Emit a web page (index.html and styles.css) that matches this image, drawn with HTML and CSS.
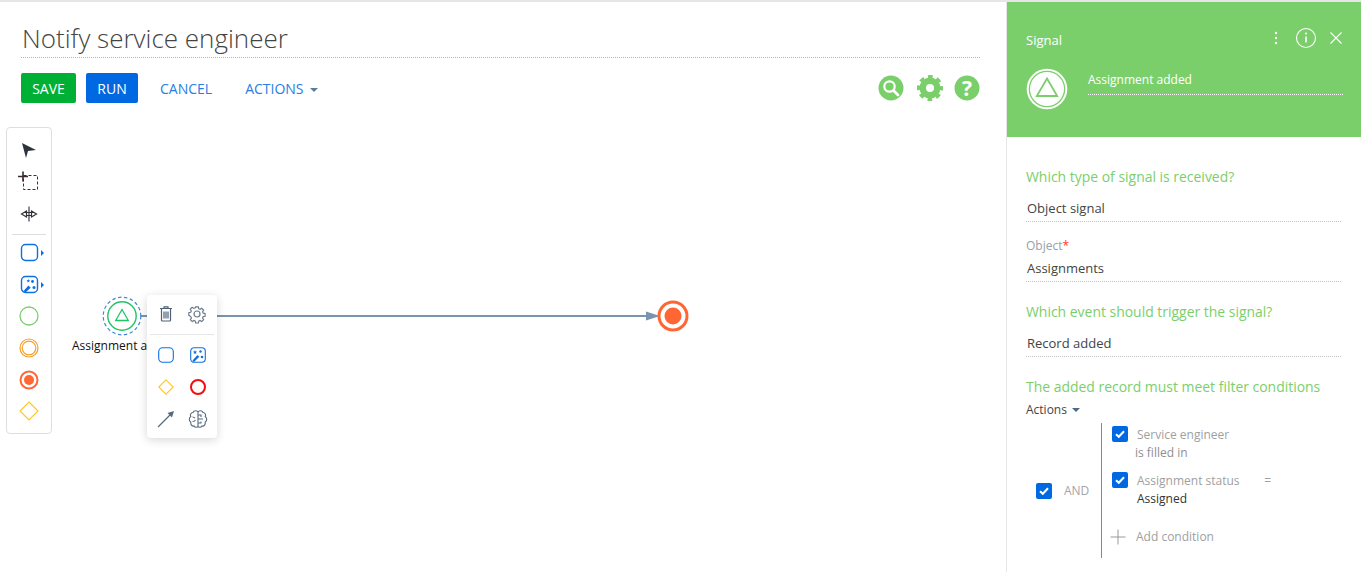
FILE: index.html
```html
<!DOCTYPE html>
<html lang="en">
<head>
<meta charset="utf-8">
<title>Notify service engineer</title>
<link rel="stylesheet" href="styles.css">
</head>
<body>
<div class="app">
  <main class="main">
    <div class="title-row"><h1 class="title">Notify service engineer</h1></div>
    <div class="actions">
      <button class="btn btn-save">SAVE</button>
      <button class="btn btn-run">RUN</button>
      <span class="link link-cancel">CANCEL</span>
      <span class="link link-actions">ACTIONS<i class="caret caret-blue"></i></span>
      <div class="tools">
        <svg class="tool" width="26" height="26" viewBox="0 0 26 26"><circle cx="13" cy="13" r="12.5" fill="#7bcf6b"/><circle cx="11.500" cy="11.500" r="5.200" fill="none" stroke="#fff" stroke-width="2.200"/><path d="M15.500 15.500l4.500 4.500" stroke="#fff" stroke-width="2.800" stroke-linecap="round"/></svg>
        <svg class="tool tool-gear" width="26" height="26" viewBox="0 0 26 26"><circle cx="13" cy="13" r="7.250" fill="none" stroke="#7bcf6b" stroke-width="6.500"/><circle cx="13" cy="13" r="11.500" fill="none" stroke="#7bcf6b" stroke-width="3" stroke-dasharray="4.800 4.232" stroke-dashoffset="2.400"/></svg>
        <svg class="tool" width="26" height="26" viewBox="0 0 26 26"><circle cx="13" cy="13" r="12.500" fill="#7bcf6b"/><text x="13" y="20.500" class="qmark">?</text></svg>
      </div>
    </div>
    <div class="canvas">
      <svg class="flow" width="700" height="60" viewBox="0 0 700 60">
        <path d="M140 30H650" stroke="#7a94ad" stroke-width="2"/>
        <path d="M646 25.500l14 4.500-14 4.500z" fill="#7a94ad"/>
      </svg>

      <aside class="palette">
        <svg class="pal" width="24" height="24" viewBox="0 0 24 24"><path d="M5 5l14 7-8 1-2 7z" fill="#2b343d"/></svg>
        <svg class="pal" width="24" height="24" viewBox="0 0 24 24"><rect x="6.500" y="5.500" width="14" height="14" fill="none" stroke="#333" stroke-dasharray="3 2"/><path d="M6 1.500v10M1 6.500h10" stroke="#3a2a33" stroke-width="1.600"/></svg>
        <svg class="pal" width="24" height="24" viewBox="0 0 24 24"><path d="M12 4.500v15" stroke="#3b3f58" stroke-width="1.200"/><path d="M9.500 9L4.500 12l5 3zM14.500 9l5 3-5 3zM9.500 10.500h5M9.500 13.500h5" stroke="#333" stroke-width="1.200" fill="none"/></svg>
        <hr class="pal-sep">
        <span class="pal-arrow"><svg width="24" height="22" viewBox="0 0 24 22"><rect x="1.500" y="2.500" width="16" height="16" rx="4" fill="none" stroke="#0d6fe0" stroke-width="1.400"/><path d="M21 8l3 3-3 3z" fill="#0d6fe0"/></svg></span>
        <span class="pal-arrow pal-arrow-last"><svg width="24" height="22" viewBox="0 0 24 22"><rect x="1.500" y="2.500" width="16" height="16" rx="4" fill="none" stroke="#0d6fe0" stroke-width="1.400"/><path d="M3.500 17l5-5.500 2.200 2.200L5.500 18.500z" fill="#0d6fe0"/><path d="M6.500 6.200l1.400 0 .4-1.300.5 1.300 1.300.1-1 .9.3 1.300-1.100-.7-1.100.7.3-1.300z" fill="#0d6fe0"/><circle cx="12.500" cy="7.500" r="1.400" fill="#0d6fe0"/><circle cx="14" cy="13.500" r="1.500" fill="#0d6fe0"/><path d="M21 8l3 3-3 3z" fill="#0d6fe0"/></svg></span>
        <svg class="pal" width="24" height="24" viewBox="0 0 24 24"><circle cx="12" cy="12" r="9" fill="none" stroke="#7bcf6b" stroke-width="1.300"/></svg>
        <svg class="pal" width="24" height="24" viewBox="0 0 24 24"><circle cx="12" cy="12" r="9" fill="none" stroke="#f7a02c" stroke-width="1.200"/><circle cx="12" cy="12" r="6.800" fill="none" stroke="#f7a02c" stroke-width="1.200"/></svg>
        <svg class="pal pal-tight" width="24" height="24" viewBox="0 0 24 24"><circle cx="12" cy="12" r="8.500" fill="none" stroke="#ff6633" stroke-width="2"/><circle cx="12" cy="12" r="5" fill="#ff6633"/></svg>
        <svg class="pal" width="24" height="24" viewBox="0 0 24 24"><path d="M12 3l9 9-9 9-9-9z" fill="none" stroke="#ffc629" stroke-width="1.200"/></svg>
      </aside>

      <div class="node-start">
        <svg width="40" height="40" viewBox="0 0 40 40"><circle cx="20" cy="20" r="18.800" fill="#fff" stroke="#3f8ad6" stroke-width="1.200" stroke-dasharray="3.500 2.500"/><circle cx="20" cy="20" r="14.200" fill="none" stroke="#1fc468" stroke-width="1.400"/><path d="M20 13.500l6.300 11h-12.600z" fill="none" stroke="#1fc468" stroke-width="1.300"/></svg>
      </div>
      <span class="node-label">Assignment added</span>

      <svg class="node-end" width="32" height="32" viewBox="0 0 32 32"><circle cx="16" cy="16" r="14" fill="#fff" stroke="#ff6633" stroke-width="3"/><circle cx="16" cy="16" r="8.500" fill="#ff6633"/></svg>

      <div class="popup">
        <div class="popup-top">
          <svg width="20" height="20" viewBox="0 0 20 20"><path d="M4 4.500h12M8 4.500V2.800h4v1.700M5.500 4.500V16a1 1 0 0 0 1 1h7a1 1 0 0 0 1-1V4.500M8 7.500v7M10 7.500v7M12 7.500v7" fill="none" stroke="#4d6275" stroke-width="1.200"/></svg>
          <svg width="20" height="20" viewBox="0 0 20 20"><circle cx="10" cy="10" r="3" fill="none" stroke="#6b7b8a" stroke-width="1.200"/><path d="M8.500 2h3l.4 2.100 1.500.7 1.900-1.200 2.100 2.100-1.200 1.900.7 1.500 2.100.4v3l-2.100.4-.7 1.500 1.200 1.900-2.100 2.100-1.900-1.200-1.500.7-.4 2.100h-3l-.4-2.100-1.500-.7-1.900 1.200-2.100-2.100 1.200-1.900-.7-1.500L.9 11.500v-3L3 8.100l.7-1.500L2.500 4.700l2.100-2.100 1.900 1.200 1.500-.7z" transform="translate(1 1) scale(.9)" fill="none" stroke="#6b7b8a" stroke-width="1.300"/></svg>
        </div>
        <div class="popup-grid">
          <svg width="20" height="20" viewBox="0 0 20 20"><rect x="2.700" y="2.700" width="14.600" height="14.600" rx="4" fill="none" stroke="#0d6fe0" stroke-width="1.100"/></svg>
          <svg width="20" height="20" viewBox="0 0 20 20"><rect x="2.700" y="2.700" width="14.600" height="14.600" rx="3.500" fill="none" stroke="#0d6fe0" stroke-width="1.100"/><path d="M4.500 15.500l5-5.500 1.800 1.800L6 17z" fill="#0d6fe0"/><path d="M7 5l.6 1.400 1.400.2-1 1 .3 1.400L7 8.300 5.700 9l.3-1.400-1-1 1.400-.2z" fill="#0d6fe0"/><circle cx="12.500" cy="6.500" r="1.200" fill="#0d6fe0"/><circle cx="14" cy="12" r="1.300" fill="#0d6fe0"/></svg>
          <svg width="20" height="20" viewBox="0 0 20 20"><path d="M10 2.800l7.200 7.200-7.200 7.200L2.800 10z" fill="none" stroke="#ffc629" stroke-width="1.100"/></svg>
          <svg width="20" height="20" viewBox="0 0 20 20"><circle cx="10" cy="10" r="7" fill="none" stroke="#f40d0d" stroke-width="2"/></svg>
          <svg width="20" height="20" viewBox="0 0 20 20"><path d="M2 18l12-12" stroke="#566a7e" stroke-width="1.300"/><path d="M18 2l-2 6.500L11.500 4z" fill="#566a7e"/></svg>
          <svg width="20" height="20" viewBox="0 0 20 20"><path d="M10 3C9 1 5.500 1.500 5 3.500 2.800 3.500 1.800 6 2.800 7.500.8 9 .8 12 2.800 13 2.300 15.500 4 17.500 6 17 7 19 10 18.500 10 17zM10 3C11 1 14.500 1.500 15 3.500 17.200 3.500 18.200 6 17.200 7.500 19.200 9 19.200 12 17.200 13 17.700 15.500 16 17.500 14 17 13 19 10 18.500 10 17zM10 6h3v2M10 10h5M10 14h3v-1.500M4.500 8c1 0 2 .3 2.500 1.300M4.500 12.500c1.500 0 2.500-.5 3-1.500" fill="none" stroke="#56697d" stroke-width="1.100"/></svg>
        </div>
      </div>
    </div>
  </main>

  <aside class="panel">
    <header class="panel-head">
      <div class="head-top">
        <span class="head-name">Signal</span>
        <span class="head-icons">
          <svg class="h-dots" width="4" height="14" viewBox="0 0 4 14"><circle cx="2" cy="2" r="1.200" fill="#fff"/><circle cx="2" cy="7" r="1.200" fill="#fff"/><circle cx="2" cy="12" r="1.200" fill="#fff"/></svg>
          <svg class="h-info" width="22" height="22" viewBox="0 0 22 22"><circle cx="11" cy="11" r="9.500" fill="none" stroke="#fff" stroke-width="1.100"/><path d="M11 9.500v6" stroke="#fff" stroke-width="1.600"/><circle cx="11" cy="6.500" r="1.100" fill="#fff"/></svg>
          <svg width="14" height="14" viewBox="0 0 14 14"><path d="M1.500 1.500l11 11M12.500 1.500l-11 11" stroke="#fff" stroke-width="1.100"/></svg>
        </span>
      </div>
      <div class="head-body">
        <svg width="42" height="42" viewBox="0 0 42 42"><circle cx="21" cy="21" r="20.300" fill="#fff"/><circle cx="21" cy="21" r="18.300" fill="#7bcf6b"/><circle cx="21" cy="21" r="17" fill="#fff"/><path d="M21 10.500l10.200 17.500H10.800z" fill="none" stroke="#7bcf6b" stroke-width="1.800"/></svg>
        <div class="head-title">Assignment added</div>
      </div>
    </header>
    <div class="panel-body">
      <h2 class="q q-first">Which type of signal is received?</h2>
      <div class="value">Object signal</div>
      <label class="field-label">Object<span class="req">*</span></label>
      <div class="value value-tight">Assignments</div>
      <h2 class="q q-next">Which event should trigger the signal?</h2>
      <div class="value">Record added</div>
      <h2 class="q q-next">The added record must meet filter conditions</h2>
      <div class="filter-actions">Actions<i class="caret caret-slate"></i></div>
      <div class="filter">
        <div class="group">
          <span class="check"><svg width="16" height="16" viewBox="0 0 16 16"><path d="M4 8.200l2.800 2.600L12 5.300" fill="none" stroke="#fff" stroke-width="2"/></svg></span>
          <span class="and">AND</span>
        </div>
        <div class="conditions">
          <div class="cond">
            <span class="check"><svg width="16" height="16" viewBox="0 0 16 16"><path d="M4 8.200l2.800 2.600L12 5.300" fill="none" stroke="#fff" stroke-width="2"/></svg></span>
            <div class="cond-text"><div class="c-name">Service engineer</div><div class="c-val c-muted">is filled in</div></div>
          </div>
          <div class="cond cond-second">
            <span class="check"><svg width="16" height="16" viewBox="0 0 16 16"><path d="M4 8.200l2.800 2.600L12 5.300" fill="none" stroke="#fff" stroke-width="2"/></svg></span>
            <div class="cond-text"><div class="c-name">Assignment status<span class="eq">=</span></div><div class="c-val">Assigned</div></div>
          </div>
          <div class="add">
            <svg width="16" height="16" viewBox="0 0 16 16"><path d="M8 0.500v15M0.500 8h15" stroke="#999"/></svg>
            <span>Add condition</span>
          </div>
        </div>
      </div>
    </div>
  </aside>
</div>
</body>
</html>
```

FILE: styles.css
```css
* { box-sizing: border-box; }
html, body { margin: 0; height: 100%; overflow: hidden; background: #fff; }
body { font-family: "Open Sans", sans-serif; color: #444; }

.app { display: flex; width: 1361px; height: 572px; border-top: 2px solid #e6e6e6; }

.main { width: 1006px; padding: 0 26px 0 21px; display: flex; flex-direction: column; }
.title-row { height: 56px; border-bottom: 1px dotted #b5b5b5; padding-left: 1px; }
.title { margin: 0; font-size: 26px; font-weight: 300; line-height: 36px; padding-top: 18px; color: #444; height: 55px; }

.actions { display: flex; align-items: center; margin-top: 15px; height: 30px; }
.btn { border: 0; height: 30px; border-radius: 2px; color: #fff; font: 500 14px "Open Sans", sans-serif; padding: 0; }
.btn-save { width: 55px; background: #00b035; }
.btn-run { width: 52px; margin-left: 10px; background: #0069e1; }
.link { color: #2a7de1; font-size: 14px; }
.link-cancel { margin-left: 22px; }
.link-actions { margin-left: 33px; }
.caret { display: inline-block; width: 0; height: 0; border-left: 4px solid transparent; border-right: 4px solid transparent; border-top: 4px solid; vertical-align: 2px; }
.caret-blue { margin-left: 6px; color: #5a7d9e; }
.caret-slate { margin-left: 5px; color: #4d6a85; }
.tools { margin-left: auto; display: flex; gap: 12px; }
.tool { display: block; }
.tool-gear { margin: 0 -1px 0 1px; }
.qmark { font: 700 21px "Open Sans", sans-serif; fill: #fff; text-anchor: middle; }

.canvas { position: relative; flex: 1; margin-left: -21px; }
.flow { position: absolute; left: 0; top: 183px; }

.palette { position: absolute; left: 6px; top: 24px; width: 46px; height: 307px; border: 1px solid #dedede; border-radius: 4px; background: #fff; display: flex; flex-direction: column; align-items: center; padding-top: 10px; }
.pal { display: block; margin-bottom: 8px; flex: none; }
.pal-tight { margin-bottom: 7px; }
.pal-sep { width: 34px; margin: 0 0 7px; border: 0; border-top: 1px solid #dedede; flex: none; }
.pal-arrow { display: block; height: 22px; margin: 0 0 10px 6px; flex: none; }
.pal-arrow-last { margin-bottom: 8px; }
.pal-arrow svg { display: block; }

.node-start { position: absolute; left: 102px; top: 193px; width: 40px; height: 40px; }
.node-start svg { display: block; }
.node-label { position: absolute; left: 72px; top: 234px; font-size: 12px; line-height: 17px; color: #111; white-space: nowrap; }
.node-end { position: absolute; left: 657px; top: 197px; }

.popup { position: absolute; left: 147px; top: 192px; width: 70px; height: 143px; background: #fff; border-radius: 4px; box-shadow: 0 2px 10px rgba(0, 0, 0, .16); }
.popup svg { display: block; }
.popup-top { height: 40px; margin: 0 3px; border-bottom: 1px solid #e6e6e6; display: flex; justify-content: space-between; padding: 9px 7px 0 6px; }
.popup-grid { display: grid; grid-template-columns: 20px 20px; justify-content: space-between; row-gap: 12px; padding: 10px 9px 0 9px; }

.panel { width: 355px; border-left: 1px solid #e6e6e6; }
.panel-head { height: 135px; background: #7bcf6b; color: #fff; padding: 0 18px 0 19px; }
.head-top { display: flex; justify-content: space-between; align-items: center; height: 26px; position: relative; top: 23px; }
.head-name { font-size: 13px; position: relative; top: 2px; }
.head-icons { display: flex; align-items: center; }
.head-icons svg { display: block; }
.h-dots { margin-right: 17px; }
.h-info { margin-right: 12px; }
.head-body { display: flex; margin-top: 40px; gap: 20px; align-items: flex-start; }
.head-title { flex: 1; font-size: 12px; line-height: 17px; height: 27px; padding-top: 3px; border-bottom: 1px dotted #fff; }

.panel-body { padding: 0 20px 0 19px; }
.q { margin: 0; font-size: 13.950px; font-weight: 400; color: #7bcf6b; line-height: 19px; }
.q-first { padding-top: 30px; }
.q-next { padding-top: 20px; }
.value { margin-top: 12px; padding: 0 1px; height: 24px; font-size: 13px; line-height: 20px; color: #444; border-bottom: 1px dotted #c2c2c2; }
.value-tight { margin-top: 3px; }
.field-label { display: block; margin-top: 15px; font-size: 12px; line-height: 18px; color: #98a0a8; }
.req { color: #ff3a2a; }

.filter-actions { margin-top: 5px; font-size: 12px; line-height: 17px; color: #444; }
.filter { display: flex; margin-top: 5px; height: 135px; }
.group { width: 76px; display: flex; align-items: center; padding-left: 10px; border-right: 1px solid #29a8df; }
.and { margin-left: 12px; font-size: 12px; color: #a5a5a5; }
.check { display: block; flex: none; width: 16px; height: 16px; border-radius: 2px; background: #0069e1; }
.check svg { display: block; }
.conditions { padding: 3px 0 0 10px; flex: 1; }
.cond { display: flex; gap: 9px; }
.cond-second { margin-top: 10px; }
.cond-text { font-size: 12px; line-height: 18px; }
.c-name { color: #9f9f9f; display: flex; width: 134px; justify-content: space-between; }
.c-val { color: #333; }
.c-muted { color: #8f8f8f; margin-left: -2px; }
.add { display: flex; align-items: center; gap: 10px; margin-top: 20px; font-size: 12px; color: #a0a0a0; margin-left: -2px; }
.add svg { display: block; }
```
